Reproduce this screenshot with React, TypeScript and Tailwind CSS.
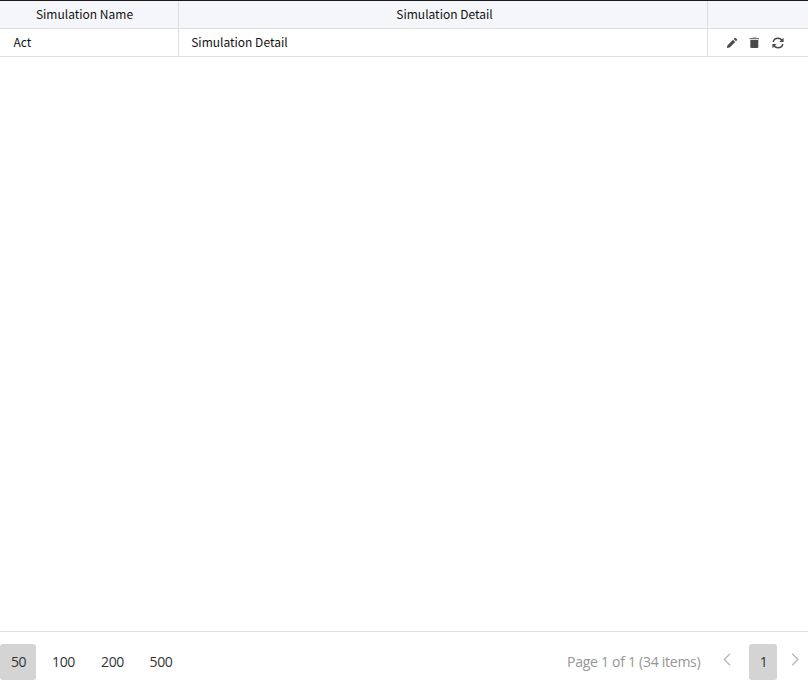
const pageSizes = [
  { label: '50', style: 'w-9 rounded-[3px] bg-[#d4d4d4] pl-px text-[#333333]' },
  { label: '100', style: 'ml-[6px] w-[43px] text-[#333333]' },
  { label: '200', style: 'ml-[6px] w-[43px] text-[#333333]' },
  { label: '500', style: 'ml-[6px] w-[42px] text-[#333333]' },
];

function Pencil() {
  return (
    <svg className="h-3 w-3" viewBox="0 0 12 12" fill="#4a4a4a">
      <path d="M.9 11 1.4 8.4 7 2.8 9.2 5 3.6 10.6Z M7.7 2.1 8.8 1Q9.3.6 9.7 1L11 2.3Q11.4 2.7 11 3.2L9.9 4.3Z" />
    </svg>
  );
}

function Trash() {
  return (
    <svg className="h-3 w-3" viewBox="0 0 12 12">
      <path d="M1.5 1H4.3L4.8.5H8.2L8.7 1H11V2.3H1.5Z" fill="#777777" />
      <path d="M2.3 3H10.3V10Q10.3 11 9.3 11H3.3Q2.3 11 2.3 10Z" fill="#4a4a4a" />
    </svg>
  );
}

function Refresh() {
  return (
    <svg className="h-3 w-3" viewBox="0 0 12 12">
      <path d="M1.2 5C1.7 2.8 3.6 1.2 6 1.2 7.7 1.2 9 1.9 10 3.2M10.8 7C10.3 9.2 8.4 10.8 6 10.8 4.3 10.8 3 10.1 2 8.8" fill="none" stroke="#4a4a4a" strokeWidth="1.5" />
      <path d="M11.6.8V5H7.4Z M.4 11.2V7H4.6Z" fill="#4a4a4a" />
    </svg>
  );
}

function Chevron({ right = false }: { right?: boolean }) {
  return (
    <svg className="h-[13px] w-[8px]" viewBox="0 0 8 13" fill="none" stroke="#bdbdbd" strokeWidth="1.5">
      <path d={right ? 'M1.2 .8 6.9 6.5 1.2 12.2' : 'M7 .8 1.3 6.5 7 12.2'} />
    </svg>
  );
}

export default function App() {
  return (
    <div className="flex h-[680px] w-[809px] flex-col overflow-hidden bg-white">
      <table className="w-[808px] table-fixed border-separate border-spacing-0 border-t border-[#1a181e] font-['Noto_Sans_CJK_KR','Noto_Sans',sans-serif] text-[12px] leading-[25px] text-[#111111]">
        <colgroup>
          <col className="w-[179px]" />
          <col className="w-[529px]" />
          <col className="w-[100px]" />
        </colgroup>
        <thead className="bg-[#f5f6f9]">
          <tr className="h-7">
            <th className="border-r border-b border-[#dddddd] p-0 pr-[9px] pb-[2px] text-center font-normal">Simulation Name</th>
            <th className="border-r border-b border-[#dddddd] p-0 pb-[2px] pl-[3px] text-center font-normal">Simulation Detail</th>
            <th className="border-b border-[#dddddd] p-0" />
          </tr>
        </thead>
        <tbody>
          <tr className="h-7">
            <td className="border-r border-b border-[#dddddd] p-0 pb-[2px] pl-[13.5px]">Act</td>
            <td className="border-r border-b border-[#dddddd] p-0 pb-[2px] pl-[12.2px]">Simulation Detail</td>
            <td className="border-b border-[#dddddd] p-0">
              <div className="flex h-[27px] items-center pl-[18px]">
                <button aria-label="Edit"><Pencil /></button>
                <button aria-label="Delete" className="ml-[10px]"><Trash /></button>
                <button aria-label="Refresh" className="ml-3"><Refresh /></button>
              </div>
            </td>
          </tr>
        </tbody>
      </table>
      <main className="flex-1" />
      <footer className="flex h-[49px] w-[808px] items-end justify-between border-t border-[#dddddd] font-['Open_Sans','Noto_Sans',sans-serif] text-[14px] tracking-[-0.4px]">
        <div className="flex h-9">
          {pageSizes.map((size) => (
            <button key={size.label} className={`h-9 pb-px ${size.style}`}>{size.label}</button>
          ))}
        </div>
        <div className="flex h-9 items-center">
          <span className="w-[134px] pb-px tracking-[-0.27px] whitespace-nowrap text-[#969696]">Page 1 of 1 (34 items)</span>
          <button aria-label="Previous page" className="mb-[5px] ml-[22px]"><Chevron /></button>
          <button className="ml-[18px] h-9 w-7 rounded-[3px] bg-[#d4d4d4] pb-px pl-px text-[#333333]">1</button>
          <button aria-label="Next page" className="mr-[9px] mb-[5px] ml-[14px]"><Chevron right /></button>
        </div>
      </footer>
    </div>
  );
}
